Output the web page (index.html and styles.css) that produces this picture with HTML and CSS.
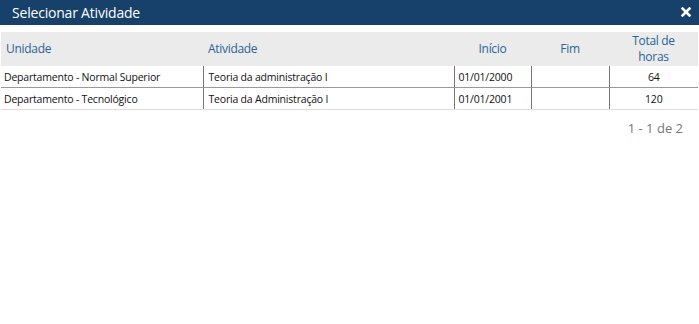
FILE: index.html
```html
<!DOCTYPE html>
<html>
<head>
<meta charset="utf-8">
<title>Selecionar Atividade</title>
<link rel="stylesheet" href="styles.css">
</head>
<body>
<div class="dlg">
	<div class="dlg_title">
		<h3>Selecionar Atividade</h3>
		<span class="dlg_close"><svg width="10" height="10" viewBox="0 0 10 10"><path d="M1.5 1.5L8.5 8.5M8.5 1.5L1.5 8.5" stroke="#fff" stroke-width="2.6" stroke-linecap="square"/></svg></span>
	</div>
	<div class="dlg_con">
		<table class="grid">
			<thead>
				<tr>
					<th class="c_uni">Unidade</th>
					<th class="c_ati">Atividade</th>
					<th class="c_ini ctr">Início</th>
					<th class="c_fim ctr">Fim</th>
					<th class="c_tot ctr">Total de<br>horas</th>
				</tr>
			</thead>
			<tbody>
				<tr>
					<td>Departamento - Normal Superior</td>
					<td>Teoria da administração I</td>
					<td>01/01/2000</td>
					<td></td>
					<td class="ctr">64</td>
				</tr>
				<tr class="last">
					<td>Departamento - Tecnológico</td>
					<td>Teoria da Administração I</td>
					<td>01/01/2001</td>
					<td></td>
					<td class="ctr">120</td>
				</tr>
			</tbody>
		</table>
		<div class="pager">1 - 1 de 2</div>
	</div>
</div>
</body>
</html>
```
FILE: styles.css
```css
html,body,h3{ margin:0; padding:0;}
body{ background:#fff; font-family:"Open Sans","Noto Sans","DejaVu Sans",sans-serif; font-size:10.5px; letter-spacing:-0.2px; color:#111;}
.dlg_title{ height:25px; background:#17406b; display:flex; align-items:center; justify-content:space-between; padding:0 8px 0 12px;}
.dlg_title h3{ font-size:14px; font-weight:normal; color:#fff; letter-spacing:-0.2px;}
.dlg_close{ display:flex; margin-top:-2px;}
.dlg_con{ padding:7px 1px 0 1px;}
.grid{ width:697px; border-collapse:collapse; table-layout:fixed;}
.grid th{ background:#ebebeb; color:#2a6496; font-weight:normal; font-size:12px; letter-spacing:-0.3px; text-align:left; height:34px; padding:0 5px; line-height:16px;}
.grid th.c_uni{ width:192px;}
.grid th.c_ati{ width:241px;}
.grid th.c_ini{ width:67px;}
.grid th.c_fim{ width:68px;}
.grid .ctr{ text-align:center;}
.grid td{ height:21px; padding:0 4px; border-left:1px solid #777; border-bottom:1px solid #999; white-space:nowrap; overflow:hidden;}
.grid td:first-child{ border-left:none; padding-left:3px;}
.grid td:nth-child(2){ padding-left:5px;}
.grid tr.last td{ border-bottom:1px solid #ddd;}
.pager{ text-align:right; color:#777; font-size:13px; letter-spacing:0; padding:9px 15px 0 0;}
```
